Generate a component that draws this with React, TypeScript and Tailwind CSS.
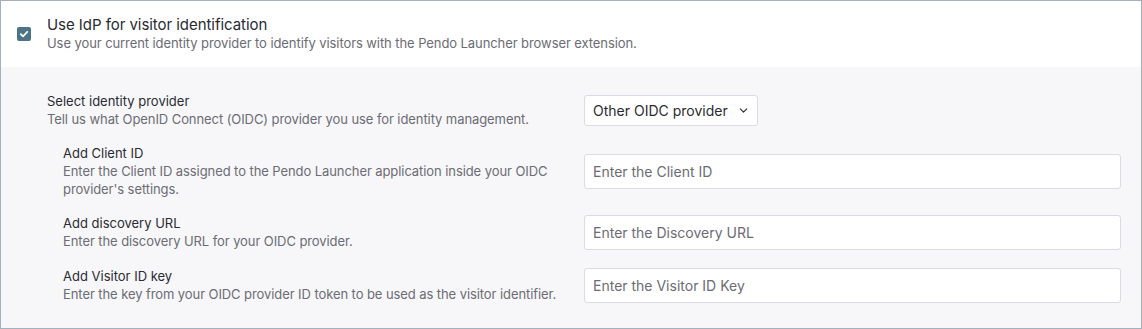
import { ChevronDown } from 'lucide-react'

const font = { fontFamily: 'Inter, "Noto Sans", sans-serif' }

function FieldText({ label, help }: { label: string; help: string }) {
  return (
    <div className="flex flex-col">
      <span className="text-[13px] leading-[18px] text-[#2a2b33]">{label}</span>
      <span className="text-[13px] leading-[18px] tracking-[-0.08px] text-[#6b6c74]">{help}</span>
    </div>
  )
}

function TextField({ placeholder }: { placeholder: string }) {
  return (
    <input
      type="text"
      placeholder={placeholder}
      className="h-[35px] w-full rounded-[3px] border border-[#dadce3] bg-white px-2 text-[14px] text-[#2a2b33] placeholder:text-[#6b6c74] outline-none"
    />
  )
}

const subFields = [
  {
    label: 'Add Client ID',
    help: "Enter the Client ID assigned to the Pendo Launcher application inside your OIDC provider's settings.",
    placeholder: 'Enter the Client ID',
  },
  {
    label: 'Add discovery URL',
    help: 'Enter the discovery URL for your OIDC provider.',
    placeholder: 'Enter the Discovery URL',
  },
  {
    label: 'Add Visitor ID key',
    help: 'Enter the key from your OIDC provider ID token to be used as the visitor identifier.',
    placeholder: 'Enter the Visitor ID Key',
  },
]

export default function App() {
  return (
    <div style={font} className="h-[329px] w-[1142px] overflow-hidden border border-[#a3b1bc] bg-white">
      <div className="flex h-[66px] items-center pl-4">
        <div className="flex h-[14px] w-[14px] items-center justify-center rounded-[2px] bg-[#4b7487]">
          <svg viewBox="0 0 14 14" className="h-[14px] w-[14px]">
            <path d="M3.8 7.2 L6 9.3 L10.3 4.9" fill="none" stroke="white" strokeWidth="1.8" strokeLinecap="round" strokeLinejoin="round" />
          </svg>
        </div>
        <div className="ml-4 flex flex-col">
          <span className="text-[15px] leading-[18px] tracking-[-0.05px] text-[#2a2b33]">Use IdP for visitor identification</span>
          <span className="text-[13px] leading-[18px] tracking-[-0.08px] text-[#6b6c74]">
            Use your current identity provider to identify visitors with the Pendo Launcher browser extension.
          </span>
        </div>
      </div>

      <div className="flex h-[261px] flex-col gap-4 bg-[#f7f7f9] pt-[25px] pl-[46px] pr-5">
        <div className="grid grid-cols-[537px_1fr] items-center">
          <FieldText
            label="Select identity provider"
            help="Tell us what OpenID Connect (OIDC) provider you use for identity management."
          />
          <div>
            <button
              type="button"
              className="flex h-[31px] w-[174px] items-center gap-[9px] rounded-[3px] border border-[#dadce3] bg-white pl-2 text-[14px] text-[#2a2b33]"
            >
              Other OIDC provider
              <ChevronDown className="h-[13px] w-[13px]" strokeWidth={2} />
            </button>
          </div>
        </div>

        {subFields.map((f, i) => (
          <div
            key={f.label}
            className={i === 2 ? 'mt-px grid grid-cols-[537px_1fr] items-center' : 'grid grid-cols-[537px_1fr] items-center'}
          >
            <div className="pl-4 pr-2">
              <FieldText label={f.label} help={f.help} />
            </div>
            <TextField placeholder={f.placeholder} />
          </div>
        ))}
      </div>
    </div>
  )
}
